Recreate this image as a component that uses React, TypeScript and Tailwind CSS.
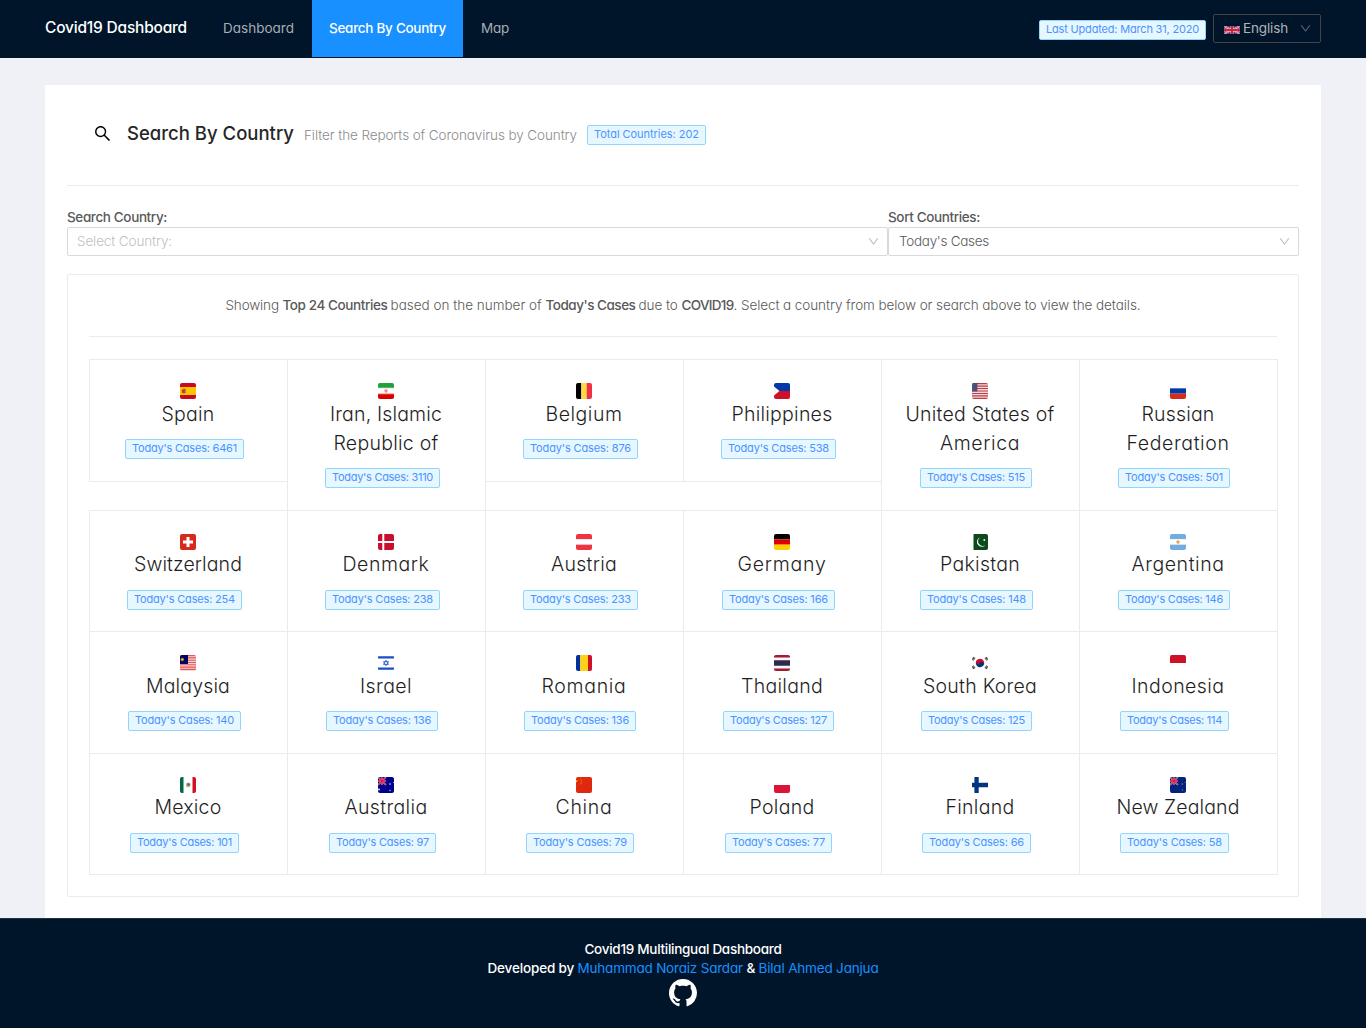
import { useLayoutEffect, useRef, useState, type ReactNode } from "react";
import { AiOutlineDown, AiOutlineSearch } from "react-icons/ai";

/* Text whose tracking is adjusted so that it fills a given width. */
function Fit({ w, className = "", children }: { w: number; className?: string; children: string }) {
  const ref = useRef<HTMLSpanElement>(null);
  const [spacing, setSpacing] = useState(0);
  useLayoutEffect(() => {
    const el = ref.current;
    if (!el) return;
    const previous = el.style.letterSpacing;
    el.style.letterSpacing = "0px";
    const natural = el.getBoundingClientRect().width;
    el.style.letterSpacing = previous;
    setSpacing((w - natural) / children.length);
  }, [w, children]);
  return (
    <span ref={ref} className={`inline-block whitespace-pre ${className}`} style={{ letterSpacing: `${spacing}px` }}>
      {children}
    </span>
  );
}

function Tag({ w, children }: { w: number; children: string }) {
  return (
    <span className="inline-flex h-5 items-center rounded-xs border border-[#91d5ff] bg-[#e6f7ff] px-1.5 pb-0.5 text-[11px] leading-4 font-normal text-[#4a94ff]">
      <Fit w={w - 14}>{children}</Fit>
    </span>
  );
}

const stripesH = (colors: string[]) =>
  colors.map((c, i) => <rect key={i} y={(16 / colors.length) * i} width="16" height={16 / colors.length} fill={c} />);

const stripesV = (colors: string[]) =>
  colors.map((c, i) => <rect key={i} x={(16 / colors.length) * i} width={16 / colors.length} height="16" fill={c} />);

const unionCanton = (
  <>
    <path d="M0 0l8 8M8 0L0 8" stroke="#fff" strokeWidth="1.4" strokeOpacity=".8" />
    <path d="M0 0l8 8M8 0L0 8" stroke="#e4002b" strokeWidth=".7" />
    <path d="M4 0v8M0 4h8" stroke="#fff" strokeWidth="1.8" strokeOpacity=".8" />
    <path d="M4 0v8M0 4h8" stroke="#e4002b" strokeWidth="1.4" />
  </>
);

const flags: Record<string, ReactNode> = {
  es: (
    <>
      <path fill="#c60b1e" d="M0 0h16v16H0z" />
      <path fill="#ffc400" d="M0 4h16v8H0z" />
      <path fill="#ad1519" opacity=".75" d="M1.800 6.400h1.200L4 5.400l1.600.8v3.600L4 10.600 1.800 9.800z" />
      <path fill="#7a8a8f" d="M4.600 6.800H6v2h-1.400z" />
    </>
  ),
  ir: (
    <>
      {stripesH(["#239f40", "#fff", "#da0000"])}
      <path d="M0 4.8h16M0 11.1h16" stroke="#fff" strokeOpacity=".5" strokeWidth=".6" />
      <path fill="#e66" d="M6.2 6.6h3.6L9.2 9 8 10 6.8 9z" opacity=".8" />
    </>
  ),
  be: stripesV(["#000", "#fdda44", "#ef3340"]),
  ph: (
    <>
      <path fill="#0038a8" d="M0 0h16v8H0z" />
      <path fill="#ce1126" d="M0 8h16v8H0z" />
      <path fill="#fff" d="M0 3.500l5.500 4.500L0 12.500z" />
      <circle cx="1" cy="8" r=".9" fill="#fcf0d0" />
    </>
  ),
  us: (
    <>
      <path fill="#f3d8dc" d="M0 0h16v16H0z" />
      <path stroke="#bd3d44" strokeWidth="1.23" d="M0 .6h16M0 3.1h16M0 5.5h16M0 8h16M0 10.5h16M0 12.9h16M0 15.4h16" />
      <path fill="#4a4a78" d="M0 0h5.4v8.6H0z" />
      <path stroke="#8284a8" strokeWidth=".5" strokeDasharray=".5 .8" d="M0 1.5h5.4M0 3.5h5.4M0 5.5h5.4M0 7.3h5.4" />
    </>
  ),
  ru: stripesH(["#fff", "#0039a6", "#d52b1e"]),
  ch: (
    <>
      <path fill="#d52b1e" d="M0 0h16v16H0z" />
      <path fill="#fff" d="M6.5 3h3v3.5H13v3H9.5V13h-3V9.500H3v-3h3.500z" />
    </>
  ),
  dk: (
    <>
      <path fill="#c8102e" d="M0 0h16v16H0z" />
      <path stroke="#fff" strokeWidth="2" d="M5.300 0v16M0 8h16" />
    </>
  ),
  at: stripesH(["#ef3340", "#fff", "#ef3340"]),
  de: stripesH(["#000", "#d00", "#ffce00"]),
  pk: (
    <>
      <path fill="#fff" d="M0 0h2v16H0z" />
      <path fill="#0c4a1e" d="M1.500 0H16v16H1.500z" />
      <path fill="#fff" d="M8 3.200a5 5 0 1 0 5.800 7.800A4.600 4.600 0 0 1 8 3.200z" />
      <circle cx="12.300" cy="6" r="1" fill="#e8efe9" />
    </>
  ),
  ar: (
    <>
      {stripesH(["#74acdf", "#fff", "#74acdf"])}
      <circle cx="8" cy="8" r="1.700" fill="#e8a33d" />
    </>
  ),
  my: (
    <>
      <path fill="#f7d3d3" d="M0 0h16v16H0z" />
      <path stroke="#e05a5a" strokeWidth="1.100" d="M0 .6h16M0 2.900h16M0 5.200h16M0 7.500h16M0 9.800h16M0 12.100h16M0 14.400h16" />
      <path fill="#010066" d="M0 0h8v9.100H0z" />
      <circle cx="2.300" cy="4.500" r="1.800" fill="#fc0" opacity=".6" />
      <circle cx="2.300" cy="4.500" r=".9" fill="#fc0" />
    </>
  ),
  il: (
    <>
      <path fill="#fff" d="M0 0h16v16H0z" />
      <path fill="#1a4fc8" d="M0 1.300h16v2.200H0zM0 12.500h16v2.200H0z" />
      <path fill="none" stroke="#1a4fc8" strokeWidth=".75" d="M8 5.200l2.500 4.200h-5zM8 10.800L5.500 6.600h5z" />
    </>
  ),
  ro: (
    <>
      <path fill="#00319c" d="M0 0h4.300v16H0z" />
      <path fill="#fcd116" d="M4.200 0h7.800v16H4.200z" />
      <path fill="#ce1126" d="M12 0h4v16h-4z" />
    </>
  ),
  th: (
    <>
      <path fill="#f4f5f8" d="M0 0h16v16H0z" />
      <path fill="#a51931" d="M0 0h16v2.500H0zM0 13.500h16V16H0z" />
      <path fill="#2d2a4a" d="M0 5.300h16v5.400H0z" />
    </>
  ),
  kr: (
    <>
      <path fill="#fff" d="M0 0h16v16H0z" />
      <g transform="rotate(30 8 8)">
        <path fill="#c60c30" d="M3.800 8a4.200 4.200 0 0 1 8.400 0z" />
        <path fill="#003478" d="M3.800 8a4.200 4.200 0 0 0 8.400 0z" />
        <circle cx="5.900" cy="8" r="2.100" fill="#c60c30" />
        <circle cx="10.100" cy="8" r="2.100" fill="#003478" />
      </g>
      <path stroke="#444" strokeWidth="2.600" strokeDasharray=".9 .2" d="M.6 5l2-2.800M15.400 5l-2-2.800M.6 11l2 2.800M15.400 11l-2 2.800" />
    </>
  ),
  id: stripesH(["#ce1126", "#fff"]),
  mx: (
    <>
      <path fill="#fff" d="M0 0h16v16H0z" />
      <path fill="#006847" d="M0 0h3.500v16H0z" />
      <path fill="#ce1126" d="M12.500 0H16v16h-3.500z" />
      <circle cx="8.200" cy="8" r="2.400" fill="#a9a08a" opacity=".8" />
      <circle cx="8.500" cy="7.500" r="1.300" fill="#75593c" />
    </>
  ),
  au: (
    <>
      <path fill="#00008b" d="M0 0h16v16H0z" />
      {unionCanton}
      <circle cx="1" cy="12.600" r="1" fill="#fff" opacity=".9" />
      <circle cx="12" cy="7" r=".8" fill="#fff" opacity=".9" />
      <circle cx="12" cy="13.500" r=".7" fill="#fff" opacity=".8" />
      <circle cx="15.500" cy="5.500" r=".5" fill="#fff" opacity=".8" />
    </>
  ),
  cn: (
    <>
      <path fill="#de2910" d="M0 0h16v16H0z" />
      <path fill="#ffb800" opacity=".85" d="M0 3l1.800.3L1.200 5 0 5.500z" />
      <path stroke="#ffb800" strokeWidth=".8" strokeDasharray=".9 .9" fill="none" d="M4 1.500q3 2.600.2 6" />
    </>
  ),
  pl: stripesH(["#fff", "#dc143c"]),
  fi: (
    <>
      <path fill="#fff" d="M0 0h16v16H0z" />
      <path fill="#003580" d="M2.400 0h4.300v16H2.400zM0 5.700h16v4.500H0z" />
    </>
  ),
  nz: (
    <>
      <path fill="#00247d" d="M0 0h16v16H0z" />
      {unionCanton}
      <circle cx="12.200" cy="7" r=".8" fill="#d66" />
      <circle cx="15.200" cy="5.500" r=".5" fill="#c66" />
      <circle cx="12.400" cy="13" r=".7" fill="#c66" />
    </>
  ),
};

type Country = { code: string; lines: [string, number][]; cases: string; tag: number };

const rows: { height: string; offset: string; items: Country[] }[] = [
  {
    height: "h-[151px]",
    offset: "pt-px pb-2.5",
    items: [
      { code: "es", lines: [["Spain", 53]], cases: "6461", tag: 119 },
      { code: "ir", lines: [["Iran, Islamic", 112], ["Republic of", 105]], cases: "3110", tag: 115 },
      { code: "be", lines: [["Belgium", 77]], cases: "876", tag: 115 },
      { code: "ph", lines: [["Philippines", 101]], cases: "538", tag: 115 },
      { code: "us", lines: [["United States of", 149], ["America", 80]], cases: "515", tag: 112 },
      { code: "ru", lines: [["Russian", 73], ["Federation", 103]], cases: "501", tag: 112 },
    ],
  },
  {
    height: "h-[121px]",
    offset: "pb-[11px]",
    items: [
      { code: "ch", lines: [["Switzerland", 108]], cases: "254", tag: 115 },
      { code: "dk", lines: [["Denmark", 87]], cases: "238", tag: 115 },
      { code: "at", lines: [["Austria", 66]], cases: "233", tag: 115 },
      { code: "de", lines: [["Germany", 89]], cases: "166", tag: 113 },
      { code: "pk", lines: [["Pakistan", 80]], cases: "148", tag: 113 },
      { code: "ar", lines: [["Argentina", 93]], cases: "146", tag: 112 },
    ],
  },
  {
    height: "h-[122px]",
    offset: "pt-px pb-2.5",
    items: [
      { code: "my", lines: [["Malaysia", 84]], cases: "140", tag: 113 },
      { code: "il", lines: [["Israel", 52]], cases: "136", tag: 112 },
      { code: "ro", lines: [["Romania", 85]], cases: "136", tag: 112 },
      { code: "th", lines: [["Thailand", 82]], cases: "127", tag: 111 },
      { code: "kr", lines: [["South Korea", 114]], cases: "125", tag: 111 },
      { code: "id", lines: [["Indonesia", 93]], cases: "114", tag: 109 },
    ],
  },
  {
    height: "h-[121px]",
    offset: "pb-[11px]",
    items: [
      { code: "mx", lines: [["Mexico", 67]], cases: "101", tag: 109 },
      { code: "au", lines: [["Australia", 83]], cases: "97", tag: 107 },
      { code: "cn", lines: [["China", 57]], cases: "79", tag: 108 },
      { code: "pl", lines: [["Poland", 65]], cases: "77", tag: 107 },
      { code: "fi", lines: [["Finland", 69]], cases: "66", tag: 109 },
      { code: "nz", lines: [["New Zealand", 123]], cases: "58", tag: 109 },
    ],
  },
];

function CountryCell({ country, short, offset }: { country: Country; short: boolean; offset: string }) {
  return (
    <div
      className={`flex w-[198px] flex-col items-center pt-6 shadow-[1px_0_0_0_#ebebeb,0_1px_0_0_#ebebeb,1px_1px_0_0_#ebebeb,inset_1px_0_0_0_#ebebeb,inset_0_1px_0_0_#ebebeb] ${short ? "h-[122px]" : "h-full"}`}
    >
      <svg viewBox="0 0 16 16" className="size-4 shrink-0 overflow-hidden rounded-xs">
        {flags[country.code]}
      </svg>
      <h4 className={`flex flex-col items-center text-[19.5px] leading-[29px] font-light text-[#1f1f1f] ${offset}`}>
        {country.lines.map(([text, w]) => (
          <Fit key={text} w={w}>
            {text}
          </Fit>
        ))}
      </h4>
      <div className={`flex ${country.tag % 2 ? "mr-[7px]" : "mr-2"}`}>
        <Tag w={country.tag}>{`Today's Cases: ${country.cases}`}</Tag>
      </div>
    </div>
  );
}

export default function App() {
  return (
    <div className="flex h-[1028px] w-[1366px] flex-col overflow-hidden bg-[#f0f1f6] font-[Inter,sans-serif] text-[13.5px] font-light text-[#595959] [font-feature-settings:'cv11']">
      <header className="flex h-[58px] shrink-0 items-start bg-[#001529] px-[45px]">
        <div className="flex h-14 w-[160px] items-center text-[15.5px] font-medium text-white">
          <Fit w={142}>Covid19 Dashboard</Fit>
        </div>
        <nav className="flex h-[57px] items-center font-normal text-[#a6adb4]">
          <a className="flex h-full w-[107px] items-center pl-[18px]">
            <Fit w={71}>Dashboard</Fit>
          </a>
          <a className="flex h-full w-[151px] items-center bg-[#1890ff] pl-[17px] font-medium text-white">
            <Fit w={117}>Search By Country</Fit>
          </a>
          <a className="flex h-full items-center pl-[18px]">
            <Fit w={28}>Map</Fit>
          </a>
        </nav>
        <div className="ml-auto flex h-[58px] items-center gap-[7px]">
          <span className="mt-0.5 flex">
            <Tag w={167}>Last Updated: March 31, 2020</Tag>
          </span>
          <div className="-mt-px flex h-[29px] w-[108px] items-center rounded-xs border border-[#434343] pr-2 pl-2.5 font-normal text-[#b0b4b8]">
            <svg viewBox="0 0 16 8" className="mt-[3px] h-2 w-4 shrink-0">
              <path fill="#2b3a86" d="M0 0h16v8H0z" />
              <path d="M0 0l16 8M16 0L0 8" stroke="#e8e0ea" strokeWidth="1.700" />
              <path d="M0 0l16 8M16 0L0 8" stroke="#d8283c" strokeWidth=".7" />
              <path d="M8 0v8M0 4h16" stroke="#e9b8c4" strokeWidth="3" />
              <path d="M8 0v8M0 4h16" stroke="#d8203a" strokeWidth="2" />
            </svg>
            <span className="ml-[3px]">
              <Fit w={45}>English</Fit>
            </span>
            <AiOutlineDown className="ml-auto text-[13px] text-[#59636d]" />
          </div>
        </div>
      </header>

      <main className="mx-[45px] mt-[27px] flex flex-1 flex-col bg-white px-[22px]">
        <div className="flex h-[100px] items-center pl-[26px]">
          <AiOutlineSearch className="-mt-1 text-[19px] text-black" />
          <h1 className="-mt-0.5 ml-[15px] text-[18.5px] font-medium text-[#262626]">
            <Fit w={167}>Search By Country</Fit>
          </h1>
          <span className="ml-2.5 text-[#8c8c8c]">
            <Fit w={273}>Filter the Reports of Coronavirus by Country</Fit>
          </span>
          <span className="ml-2.5 flex">
            <Tag w={119}>Total Countries: 202</Tag>
          </span>
        </div>
        <div className="border-t border-[#ebebeb]" />

        <div className="mt-[22px] flex h-12">
          <div className="flex w-[821px] flex-col">
            <label className="h-[19px] leading-[19px] font-medium">
              <Fit w={100}>Search Country:</Fit>
            </label>
            <div className="flex h-[29px] items-center rounded-xs border border-[#d9d9d9] pr-[7px] pl-[9px] text-[#bfbfbf]">
              <Fit w={95}>Select Country:</Fit>
              <AiOutlineDown className="ml-auto text-[13px]" />
            </div>
          </div>
          <div className="flex w-[411px] flex-col">
            <label className="h-[19px] leading-[19px] font-medium">
              <Fit w={92}>Sort Countries:</Fit>
            </label>
            <div className="flex h-[29px] items-center rounded-xs border border-[#d9d9d9] pr-[7px] pl-2.5">
              <Fit w={90}>Today's Cases</Fit>
              <AiOutlineDown className="ml-auto text-[13px] text-[#bfbfbf]" />
            </div>
          </div>
        </div>

        <section className="mt-[18px] h-[623px] rounded-xs border border-[#ebebeb] px-[21px]">
          <p className="flex h-[61px] items-center justify-center">
            <Fit w={57}>{"Showing "}</Fit>
            <Fit w={108} className="font-medium">{"Top 24 Countries "}</Fit>
            <Fit w={155}>{"based on the number of "}</Fit>
            <Fit w={93} className="font-medium">{"Today's Cases "}</Fit>
            <Fit w={43}>{"due to "}</Fit>
            <Fit w={52} className="font-medium">COVID19</Fit>
            <Fit w={407}>. Select a country from below or search above to view the details.</Fit>
          </p>
          <div className="mb-[22px] border-t border-[#ebebeb]" />
          {rows.map((row, r) => (
            <div key={r} className={`flex ${row.height}`}>
              {row.items.map((c) => (
                <CountryCell key={c.code} country={c} short={r === 0 && c.lines.length === 1} offset={row.offset} />
              ))}
            </div>
          ))}
        </section>
      </main>

      <footer className="flex h-[110px] shrink-0 flex-col items-center border-t border-[#20333f] bg-[#001529] pt-[21px] leading-[19px] font-medium text-white">
        <Fit w={197}>Covid19 Multilingual Dashboard</Fit>
        <div className="flex">
          <Fit w={90}>{"Developed by "}</Fit>
          <Fit w={169} className="font-normal text-[#1890ff]">{"Muhammad Noraiz Sardar "}</Fit>
          <Fit w={12}>{"& "}</Fit>
          <Fit w={120} className="font-normal text-[#1890ff]">Bilal Ahmed Janjua</Fit>
        </div>
        <svg viewBox="0 0 16 16" className="mt-px size-7" fill="currentColor">
          <path d="M8 0C3.580 0 0 3.580 0 8c0 3.540 2.290 6.530 5.470 7.590.4.070.55-.17.55-.38 0-.19-.01-.82-.01-1.490-2.010.37-2.530-.49-2.690-.94-.09-.23-.48-.94-.82-1.130-.28-.15-.68-.52-.01-.53.63-.01 1.080.58 1.230.82.72 1.210 1.870.87 2.330.66.07-.52.28-.87.51-1.070-1.780-.2-3.640-.89-3.640-3.950 0-.87.31-1.590.82-2.150-.08-.2-.36-1.020.08-2.120 0 0 .67-.21 2.200.82.64-.18 1.320-.27 2-.27s1.360.09 2 .27c1.530-1.040 2.200-.82 2.200-.82.44 1.100.16 1.920.08 2.120.51.56.82 1.270.82 2.150 0 3.070-1.870 3.750-3.650 3.950.29.25.54.73.54 1.480 0 1.070-.01 1.930-.01 2.200 0 .21.15.46.55.38A8.010 8.010 0 0 0 16 8c0-4.420-3.580-8-8-8z" />
        </svg>
      </footer>
    </div>
  );
}
